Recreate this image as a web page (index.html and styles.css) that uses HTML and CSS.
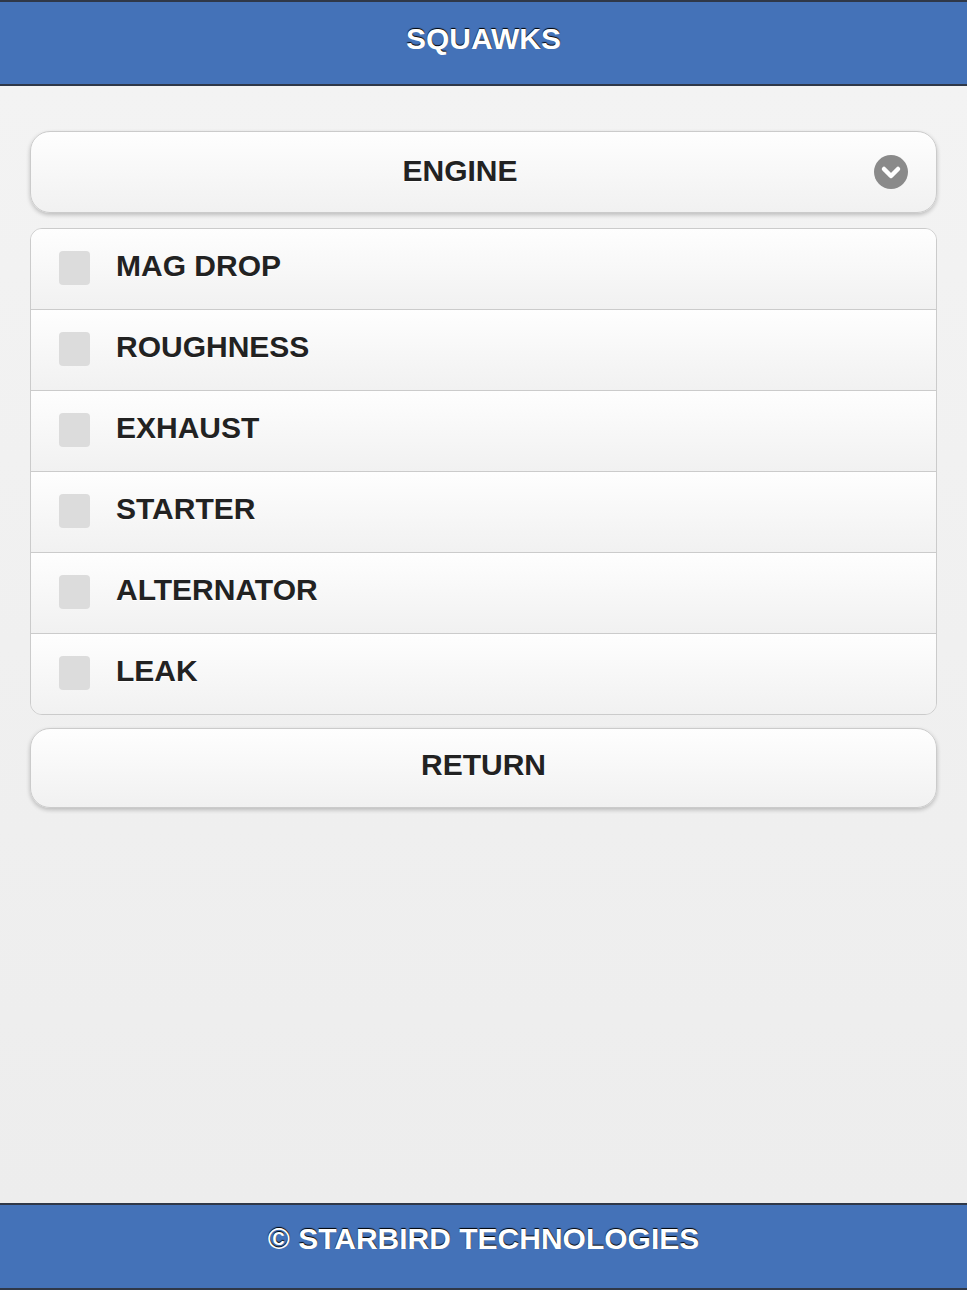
FILE: index.html
```html
<!DOCTYPE html>
<html lang="en">
<head>
  <meta charset="UTF-8">
  <meta name="viewport" content="width=device-width, initial-scale=1.0">
  <title>Squawks</title>
  <link rel="stylesheet" href="styles.css">
</head>
<body>
  <div class="page">
    <div class="bar header">SQUAWKS</div>

    <div class="content">
      <div class="select">
        <span class="select-text">ENGINE</span>
        <span class="select-icon">
          <svg width="34" height="34" viewBox="0 0 34 34">
            <circle cx="17" cy="17" r="17" fill="#8a8a8a"/>
            <path d="M10 14 L17 21 L24 14" fill="none" stroke="#fff" stroke-width="4.5" stroke-linecap="round" stroke-linejoin="round"/>
          </svg>
        </span>
      </div>

      <div class="checklist">
        <label class="item"><span class="box"></span><span class="label">MAG DROP</span></label>
        <label class="item"><span class="box"></span><span class="label">ROUGHNESS</span></label>
        <label class="item"><span class="box"></span><span class="label">EXHAUST</span></label>
        <label class="item"><span class="box"></span><span class="label">STARTER</span></label>
        <label class="item"><span class="box"></span><span class="label">ALTERNATOR</span></label>
        <label class="item"><span class="box"></span><span class="label">LEAK</span></label>
      </div>

      <div class="btn"><span class="label">RETURN</span></div>
    </div>

    <div class="bar footer">&copy; STARBIRD TECHNOLOGIES</div>
  </div>
</body>
</html>
```

FILE: styles.css
```css
*{margin: 0;padding: 0;box-sizing: border-box;}
body {
  font-family: "Liberation Sans", Arial, sans-serif;
  font-weight: bold;
  color: #222;
  background: #f0f0f0;
}
.page {
  display: flex;
  flex-direction: column;
  height: 1290px;
}
.bar {
  background: #4472b8;
  color: #fff;
  font-size: 30px;
  text-align: center;
  text-shadow: 0 -1px 1px #000;
  border-top: 2px solid #2f3848;
  border-bottom: 2px solid #2f3848;
}
.header {
  height: 86px;
  line-height: 74px;
}
.footer {
  height: 87px;
  line-height: 68px;
}
.content {
  flex: 1;
  padding: 45px 30px 0;
  background: linear-gradient(#f3f3f3, #ededed);
  display: flex;
  flex-direction: column;
  gap: 15px;
}
.select, .btn {
  height: 82px;
  border: 1px solid #cbcbcb;
  border-radius: 20px;
  background: linear-gradient(#fefefe, #f1f1f1);
  box-shadow: 0 2px 4px rgba(0,0,0,0.22);
  font-size: 30px;
  text-shadow: 0 1px 0 #fff;
  display: flex;
  align-items: center;
}
.select {
  padding: 0 28px 0 28px;
}
.select-text {
  flex: 1;
  text-align: center;
  padding-right: 13px;
  padding-bottom: 2px;
}
.select-icon {
  display: flex;
}
.btn {
  height: 80px;
  margin-top: -2px;
  justify-content: center;
}
.label {
  padding-bottom: 7px;
}
.checklist {
  border: 1px solid #cbcbcb;
  border-radius: 12px;
  overflow: hidden;
}
.item {
  height: 81px;
  display: flex;
  align-items: center;
  padding-left: 28px;
  font-size: 30px;
  text-shadow: 0 1px 0 #fff;
  background: linear-gradient(#fefefe, #f1f1f1);
  border-top: 1px solid #cbcbcb;
}
.item:first-child {
  height: 80px;
  border-top: none;
}
.box {
  width: 31px;
  height: 34px;
  border-radius: 4px;
  background: #dcdcdc;
  margin-right: 26px;
  margin-top: -2px;
}
```
